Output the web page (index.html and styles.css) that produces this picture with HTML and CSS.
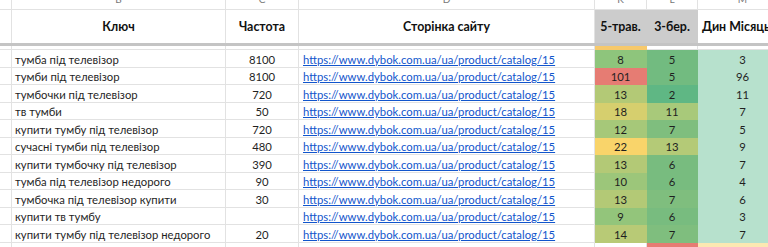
FILE: index.html
```html
<!DOCTYPE html>
<html lang="uk">
<head>
<meta charset="utf-8">
<link rel="stylesheet" href="styles.css">
</head>
<body>
<div class="sheet">
  <!-- column letters (cut off at top) -->
  <div class="c lt"></div>
  <div class="c lt"><span>B</span></div>
  <div class="c lt"><span>C</span></div>
  <div class="c lt"><span>D</span></div>
  <div class="c lt"><span>K</span></div>
  <div class="c lt"><span>L</span></div>
  <div class="c lt"><span>M</span></div>

  <!-- header -->
  <div class="c hd"></div>
  <div class="c hd ctr">Ключ</div>
  <div class="c hd ctr">Частота</div>
  <div class="c hd ctr">Сторінка сайту</div>
  <div class="c hd ctr grey">5-трав.</div>
  <div class="c hd ctr grey">3-бер.</div>
  <div class="c hd left">Дин Місяць</div>

  <div class="freeze"></div>

  <!-- partially visible row -->
  <div class="c part"></div>
  <div class="c part"></div>
  <div class="c part"></div>
  <div class="c part"></div>
  <div class="c part fill" style="--bg:#f7c96b"></div>
  <div class="c part"></div>
  <div class="c part"><span class="tick">'</span></div>

  <div class="c"></div><div class="c key">тумба під телевізор</div><div class="c num">8100</div><div class="c"><a class="url" href="#">https://www.dybok.com.ua/ua/product/catalog/15</a></div><div class="c num fill" style="--bg:#8ec57c">8</div><div class="c num fill" style="--bg:#72bb80">5</div><div class="c num fill mint">3</div>
  <div class="c"></div><div class="c key">тумби під телевізор</div><div class="c num">8100</div><div class="c"><a class="url" href="#">https://www.dybok.com.ua/ua/product/catalog/15</a></div><div class="c num fill" style="--bg:#e67c73">101</div><div class="c num fill" style="--bg:#72bb80">5</div><div class="c num fill mint">96</div>
  <div class="c"></div><div class="c key">тумбочки під телевізор</div><div class="c num">720</div><div class="c"><a class="url" href="#">https://www.dybok.com.ua/ua/product/catalog/15</a></div><div class="c num fill" style="--bg:#b3c976">13</div><div class="c num fill" style="--bg:#5fb784">2</div><div class="c num fill mint">11</div>
  <div class="c"></div><div class="c key">тв тумби</div><div class="c num">50</div><div class="c"><a class="url" href="#">https://www.dybok.com.ua/ua/product/catalog/15</a></div><div class="c num fill" style="--bg:#d6cf6e">18</div><div class="c num fill" style="--bg:#a8c97a">11</div><div class="c num fill mint">7</div>
  <div class="c"></div><div class="c key">купити тумбу під телевізор</div><div class="c num">720</div><div class="c"><a class="url" href="#">https://www.dybok.com.ua/ua/product/catalog/15</a></div><div class="c num fill" style="--bg:#a6c879">12</div><div class="c num fill" style="--bg:#7fbe7e">7</div><div class="c num fill mint">5</div>
  <div class="c"></div><div class="c key">сучасні тумби під телевізор</div><div class="c num">480</div><div class="c"><a class="url" href="#">https://www.dybok.com.ua/ua/product/catalog/15</a></div><div class="c num fill" style="--bg:#f9d46a">22</div><div class="c num fill" style="--bg:#b4ca77">13</div><div class="c num fill mint">9</div>
  <div class="c"></div><div class="c key">купити тумбочку під телевізор</div><div class="c num">390</div><div class="c"><a class="url" href="#">https://www.dybok.com.ua/ua/product/catalog/15</a></div><div class="c num fill" style="--bg:#b3c976">13</div><div class="c num fill" style="--bg:#78bc7f">6</div><div class="c num fill mint">7</div>
  <div class="c"></div><div class="c key">тумба під телевізор недорого</div><div class="c num">90</div><div class="c"><a class="url" href="#">https://www.dybok.com.ua/ua/product/catalog/15</a></div><div class="c num fill" style="--bg:#9cc67a">10</div><div class="c num fill" style="--bg:#78bc7f">6</div><div class="c num fill mint">4</div>
  <div class="c"></div><div class="c key">тумбочка під телевізор купити</div><div class="c num">30</div><div class="c"><a class="url" href="#">https://www.dybok.com.ua/ua/product/catalog/15</a></div><div class="c num fill" style="--bg:#b3c976">13</div><div class="c num fill" style="--bg:#7fbe7e">7</div><div class="c num fill mint">6</div>
  <div class="c"></div><div class="c key">купити тв тумбу</div><div class="c num"></div><div class="c"><a class="url" href="#">https://www.dybok.com.ua/ua/product/catalog/15</a></div><div class="c num fill" style="--bg:#93c57b">9</div><div class="c num fill" style="--bg:#78bc7f">6</div><div class="c num fill mint">3</div>
  <div class="c"></div><div class="c key">купити тумбу під телевізор недорого</div><div class="c num">20</div><div class="c"><a class="url" href="#">https://www.dybok.com.ua/ua/product/catalog/15</a></div><div class="c num fill" style="--bg:#b8ca76">14</div><div class="c num fill" style="--bg:#7fbe7e">7</div><div class="c num fill mint">7</div>

  <!-- next row, cut off at bottom -->
  <div class="c"></div><div class="c"></div><div class="c"></div><div class="c"></div><div class="c"></div><div class="c fill" style="--bg:#e67c73"></div><div class="c fill" style="--bg:#fce8b2"></div>
</div>
</body>
</html>
```

FILE: styles.css
```css
html, body {
  margin: 0;
  padding: 0;
  background: #ffffff;
  overflow: hidden;
}

.sheet {
  display: grid;
  grid-template-columns: 12px 214px 73px 296px 52px 51px 90px;
  grid-template-rows: 10px 33px 3px 4px repeat(11, 17.5px) 20px;
  width: 798px;
  font-family: Lato, "Noto Sans", sans-serif;
  font-size: 11.3px;
  color: #1f1f1f;
}

.c {
  border-right: 1px solid #e2e2e2;
  border-bottom: 1px solid #e2e2e2;
  display: flex;
  align-items: flex-end;
  padding: 0 3px 1px;
  white-space: nowrap;
  overflow: hidden;
  min-width: 0;
}

.lt {
  align-items: flex-start;
  justify-content: center;
  color: #777;
  font-size: 10px;
  line-height: 10px;
}
.lt span { margin-top: -6px; }

.hd {
  align-items: center;
  font-weight: 700;
  font-size: 12.4px;
  color: #111;
  padding: 0 3px;
  border-bottom: none;
}
.ctr { justify-content: center; }
.left { justify-content: flex-start; padding-left: 4px; overflow: visible; }
.grey { background: #cccccc; border-right-color: #cccccc; }

.freeze {
  grid-column: 1 / -1;
  background: #c4c4c4;
}

.part { padding: 0; }
.tick { font-size: 9px; line-height: 4px; color: #333; margin-left: 35px; }

.key { padding-left: 3px; }
.num { justify-content: center; }

.fill {
  background: var(--bg);
  border-color: transparent;
}
.mint { --bg: #b7e1cd; }

.url {
  color: #1155cc;
  text-decoration: underline;
  padding-left: 1px;
}
```
